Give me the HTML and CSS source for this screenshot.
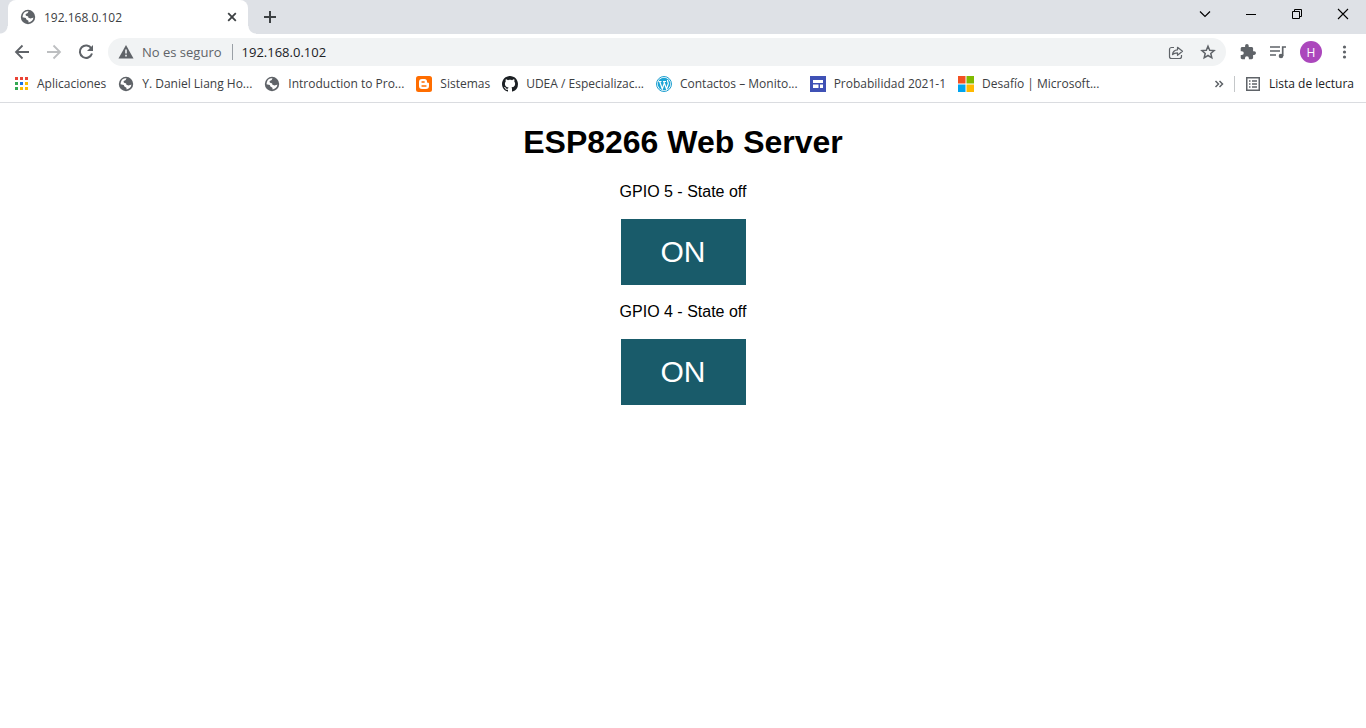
FILE: index.html
```html
<!DOCTYPE html>
<html lang="es">
<head>
<meta charset="utf-8">
<title>192.168.0.102</title>
<link rel="stylesheet" href="styles.css">
</head>
<body>
<svg class="defs" aria-hidden="true">
  <symbol id="globe" viewBox="0 0 16 16">
    <circle cx="8" cy="8" r="7.2" fill="#5f6368"/>
    <path d="M8.6 2.4 7.5 4.2 5.6 5 5.8 6.6 8.2 7.4 8.4 8.8 10.6 9.4 13.4 8.6A5.5 5.5 0 0 1 8.6 13.4L8.4 11.8 6.4 10.6 5.8 9 2.5 8.2 2.8 6.4A5.5 5.5 0 0 1 8.6 2.4z" fill="#fff"/>
    <path d="M9 2.6 8 4.4 6.2 5.2 6.4 6.6 9 7.2 9.6 8.8 13 8.4 13.4 6z" fill="#5f6368"/>
  </symbol>
</svg>
<header class="browser">
  <div class="tabstrip">
    <div class="tab">
      <svg class="icon" aria-hidden="true"><use href="#globe"/></svg>
      <span class="tab-title">192.168.0.102</span>
      <button class="plain" aria-label="Cerrar pestaña"><svg class="icon" viewBox="0 0 16 16"><path d="M4.200 4.200l7.600 7.600M11.800 4.200l-7.600 7.600" stroke="#3c4043" stroke-width="1.800"/></svg></button>
    </div>
    <button class="plain new-tab" aria-label="Nueva pestaña"><svg class="icon" viewBox="0 0 16 16"><path d="M8 2v12M2 8h12" stroke="#3c4043" stroke-width="2"/></svg></button>
    <div class="window-controls">
      <button class="plain" aria-label="Buscar pestañas"><svg class="icon" viewBox="0 0 16 16"><path d="M3 5.500l5 5 5-5" fill="none" stroke="#000" stroke-width="1.200"/></svg></button>
      <button class="plain" aria-label="Minimizar"><svg class="icon" viewBox="0 0 16 16"><path d="M3 8.500h10" stroke="#000"/></svg></button>
      <button class="plain" aria-label="Restaurar"><svg class="icon" viewBox="0 0 16 16"><path d="M3.500 5.500h7v7h-7zM5.500 5.500v-2h7v7h-2" fill="none" stroke="#000"/></svg></button>
      <button class="plain" aria-label="Cerrar"><svg class="icon" viewBox="0 0 16 16"><path d="M3 3l10 10M13 3L3 13" stroke="#000" stroke-width="1.100"/></svg></button>
    </div>
  </div>
  <div class="toolbar">
    <nav class="nav-buttons" aria-label="Navegación">
      <button class="plain" aria-label="Atrás"><svg class="icon" viewBox="0 0 16 16"><path d="M15 8H2M8.500 1.500L2 8l6.500 6.500" fill="none" stroke="#5f6368" stroke-width="1.800"/></svg></button>
      <button class="plain" aria-label="Adelante"><svg class="icon" viewBox="0 0 16 16"><path d="M1 8h13M7.500 1.500L14 8l-6.500 6.500" fill="none" stroke="#bdbfc1" stroke-width="1.800"/></svg></button>
      <button class="plain" aria-label="Recargar"><svg class="icon" viewBox="0 0 16 16"><path d="M13.400 4.500A6.200 6.200 0 1 0 14 9.500" fill="none" stroke="#5f6368" stroke-width="2"/><path d="M15 1v6H9z" fill="#5f6368"/></svg></button>
    </nav>
    <div class="address-bar">
      <svg class="icon" viewBox="0 0 16 16" aria-hidden="true"><path d="M8 1l7.500 13.500H.500z" fill="#5f6368"/><path d="M8 5.500v4M8 10.800v1.700" stroke="#f1f3f4" stroke-width="1.600"/></svg>
      <span class="security">No es seguro</span>
      <input class="url" type="text" value="192.168.0.102" aria-label="Dirección">
      <button class="plain" aria-label="Compartir"><svg class="icon" viewBox="0 0 16 16"><path d="M6 3.500H3.500a2 2 0 0 0-2 2v7a2 2 0 0 0 2 2h8a2 2 0 0 0 2-2v-1.500M4.500 10.500c.3-3 2-4.500 5-4.700V3.300l5 4-5 4V8.800c-2 0-3.700.4-5 1.700z" fill="none" stroke="#5f6368" stroke-width="1.200" stroke-linejoin="round"/></svg></button>
      <button class="plain" aria-label="Añadir a marcadores"><svg class="icon" viewBox="0 0 16 16"><path d="M8 2.200l1.700 4 4.400.4-3.300 2.900 1 4.300L8 11.500l-3.800 2.300 1-4.300-3.300-2.900 4.400-.4z" fill="none" stroke="#5f6368" stroke-width="1.500"/></svg></button>
    </div>
    <div class="actions">
      <button class="plain" aria-label="Extensiones"><svg class="icon" viewBox="1 1 22 22"><path d="M20.500 11H19V7c0-1.100-.9-2-2-2h-4V3.500a2.500 2.500 0 0 0-5 0V5H4c-1.100 0-2 .9-2 2v3.800h1.500a2.700 2.700 0 0 1 0 5.400H2V20c0 1.100.9 2 2 2h3.800v-1.500a2.700 2.700 0 0 1 5.400 0V22H17c1.100 0 2-.9 2-2v-4h1.500a2.500 2.500 0 0 0 0-5z" fill="#5f6368"/></svg></button>
      <button class="plain" aria-label="Control multimedia"><svg class="icon" viewBox="0 0 16 16"><path d="M0 3h10M0 7h10M0 11h6M12.700 12V3H16" fill="none" stroke="#5f6368" stroke-width="1.700"/><circle cx="11" cy="12" r="2.300" fill="#5f6368"/></svg></button>
      <button class="plain avatar" aria-label="Perfil H">H</button>
      <button class="plain" aria-label="Menú"><svg class="icon" viewBox="0 0 16 16"><g fill="#5f6368"><circle cx="8.500" cy="3" r="1.600"/><circle cx="8.500" cy="8" r="1.600"/><circle cx="8.500" cy="13" r="1.600"/></g></svg></button>
    </div>
  </div>
  <nav class="bookmarks" aria-label="Marcadores">
    <a href="#"><svg class="icon" viewBox="0 0 16 16"><path d="M2 1h3v3H2zM7 1h3v3H7zM12 1h3v3h-3z" fill="#ea4335"/><path d="M2 6h3v3H2zM2 11h3v3H2z" fill="#34a853"/><path d="M7 6h3v3H7z" fill="#1a73e8"/><path d="M12 6h3v3h-3zM7 11h3v3H7zM12 11h3v3h-3z" fill="#fbbc04"/></svg>Aplicaciones</a>
    <a href="#"><svg class="icon"><use href="#globe"/></svg>Y. Daniel Liang Ho...</a>
    <a href="#"><svg class="icon"><use href="#globe"/></svg>Introduction to Pro...</a>
    <a href="#"><svg class="icon" viewBox="0 0 16 16"><rect width="16" height="16" rx="2.500" fill="#ff6d00"/><path d="M6 3h2.500A2.500 2.500 0 0 1 11 5.500c0 1 .3 1.300 1 1.300.7 0 1 .3 1 1V10a3 3 0 0 1-3 3H6a3 3 0 0 1-3-3V6a3 3 0 0 1 3-3z" fill="#fff"/><path d="M6 6h2.200M6 10h4" stroke="#ff6d00" stroke-width="1.300" stroke-linecap="round"/></svg>Sistemas</a>
    <a href="#"><svg class="icon" viewBox="0 0 16 16"><path d="M8 0C3.580 0 0 3.580 0 8c0 3.540 2.290 6.530 5.470 7.590.4.070.55-.17.55-.38 0-.19-.01-.82-.01-1.490-2.010.37-2.530-.49-2.690-.94-.09-.23-.48-.94-.82-1.130-.28-.15-.68-.52-.01-.53.63-.01 1.080.58 1.230.82.72 1.210 1.870.87 2.330.66.07-.52.28-.87.51-1.070-1.780-.2-3.640-.89-3.640-3.950 0-.87.31-1.590.82-2.150-.08-.2-.36-1.020.08-2.120 0 0 .67-.21 2.200.82.64-.18 1.320-.27 2-.27s1.360.09 2 .27c1.530-1.040 2.200-.82 2.200-.82.44 1.100.16 1.920.08 2.120.51.56.82 1.270.82 2.150 0 3.070-1.870 3.750-3.650 3.950.29.25.54.73.54 1.480 0 1.070-.01 1.930-.01 2.200 0 .21.15.46.55.38A8.010 8.010 0 0 0 16 8c0-4.420-3.580-8-8-8z" fill="#1b1f23"/></svg>UDEA / Especializac...</a>
    <a href="#"><svg class="icon" viewBox="0 0 16 16"><circle cx="8" cy="8" r="7.500" fill="#fff" stroke="#1e9fd0"/><circle cx="8" cy="8" r="6.300" fill="#1ba4d5"/><path d="M2.500 5.500h3M7 5.500h3M3.700 5.500l2.600 7.500L8.200 7.500M7.800 5.500l2.700 7.500 1.700-5c.5-1.700-1.200-2.300-.5-4" fill="none" stroke="#fff" stroke-width="1.200"/></svg>Contactos – Monito...</a>
    <a href="#"><svg class="icon" viewBox="0 0 16 16"><path d="M0 0h16v16H0z" fill="#3f51b5"/><path d="M3 4h10v3H3zM3 8.500h5.500V12H3zM10 8.500h3V12h-3z" fill="#fff"/></svg>Probabilidad 2021-1</a>
    <a href="#"><svg class="icon" viewBox="0 0 16 16"><path d="M0 0h7.500v7.500H0z" fill="#f25022"/><path d="M8.500 0H16v7.500H8.500z" fill="#7fba00"/><path d="M0 8.500h7.500V16H0z" fill="#00a4ef"/><path d="M8.500 8.500H16V16H8.500z" fill="#ffb900"/></svg>Desafío | Microsoft...</a>
    <div class="bookmarks-end">
      <button class="plain" aria-label="Más marcadores"><svg class="icon" viewBox="0 0 16 16"><path d="M4.500 5l3 3-3 3M8.500 5l3 3-3 3" fill="none" stroke="#5f6368" stroke-width="1.500"/></svg></button>
      <button class="plain reading-list"><svg class="icon" viewBox="0 0 16 16"><path d="M1.750 1.750h12.500v12.500H1.750z" fill="none" stroke="#5f6368" stroke-width="1.500"/><path d="M4 5h1.500M4 8h1.500M4 11h1.500M7 5h5M7 8h5M7 11h5" stroke="#5f6368" stroke-width="1.300"/></svg>Lista de lectura</button>
    </div>
  </nav>
</header>
<main class="page">
  <h1>ESP8266 Web Server</h1>
  <p>GPIO 5 - State off</p>
  <button class="switch">ON</button>
  <p>GPIO 4 - State off</p>
  <button class="switch">ON</button>
</main>
</body>
</html>
```
FILE: styles.css
```css
* { box-sizing: border-box; }
body { margin: 0; background: #fff; color: #000; font-family: "Liberation Sans", Arial, sans-serif; }
.defs { position: absolute; width: 0; height: 0; }
.icon { width: 16px; height: 16px; flex: none; display: block; }
.plain { display: flex; align-items: center; justify-content: center; flex: none; border: 0; padding: 0; background: none; font: inherit; color: inherit; }
.browser { font-family: "Open Sans", "Segoe UI", sans-serif; font-size: 12px; color: #3c4043; border-bottom: 1px solid #dadce0; }

.tabstrip { display: flex; align-items: center; height: 34px; padding-left: 8px; background: #dee1e6; }
.tab { position: relative; display: flex; align-items: center; gap: 8px; width: 240px; height: 34px; padding: 0 8px 0 12px; border-radius: 8px 8px 0 0; background: #fff; }
/* curved feet on both sides of the active tab */
.tab::before, .tab::after { content: ""; position: absolute; bottom: 0; width: 8px; height: 8px; }
.tab::before { right: 100%; background: radial-gradient(circle at 0 0, #dee1e6 7px, #fff 8px); }
.tab::after { left: 100%; background: radial-gradient(circle at 100% 0, #dee1e6 7px, #fff 8px); }
.tab-title { flex: 1; }
.new-tab { margin-left: 14px; }
.window-controls { display: flex; gap: 30px; margin-left: auto; padding: 0 15px 6px 0; }

.toolbar { display: flex; align-items: center; height: 36px; padding: 0 14px; }
.nav-buttons { display: flex; gap: 16px; margin-right: 14px; }
.address-bar { display: flex; align-items: center; flex: 1; height: 28px; padding: 0 10px; border-radius: 14px; background: #f1f3f4; font-size: 13px; }
.security { margin-left: 8px; padding-right: 10px; border-right: 1px solid #9aa0a6; line-height: 16px; color: #5f6368; }
.url { flex: 1; min-width: 0; padding: 0 0 0 9px; border: 0; background: none; font: inherit; color: #202124; }
.address-bar .plain { margin-left: 16px; }
.actions { display: flex; align-items: center; gap: 14px; margin-left: 14px; }
.avatar { width: 22px; height: 22px; border-radius: 50%; background: #ab47bc; color: #fff; }

.bookmarks { display: flex; align-items: center; gap: 12px; padding: 4px 12px 8px 13px; line-height: 20px; white-space: nowrap; }
.bookmarks a { display: flex; align-items: center; gap: 8px; color: inherit; text-decoration: none; }
.bookmarks-end { display: flex; align-items: center; gap: 7px; margin-left: auto; }
.reading-list { height: 16px; gap: 8px; padding-left: 10px; border-left: 1px solid #c4c7c9; color: #202124; }

.page { text-align: center; }
.page h1 { margin: 21px 0 22px; font-size: 32px; line-height: 37px; }
.page p { margin: 18px 0; font-size: 16px; line-height: 18px; }
.switch { padding: 16px 40px; border: 0; background: #195b6a; color: #fff; font: 30px/34px "Liberation Sans", Arial, sans-serif; vertical-align: top; }
```
